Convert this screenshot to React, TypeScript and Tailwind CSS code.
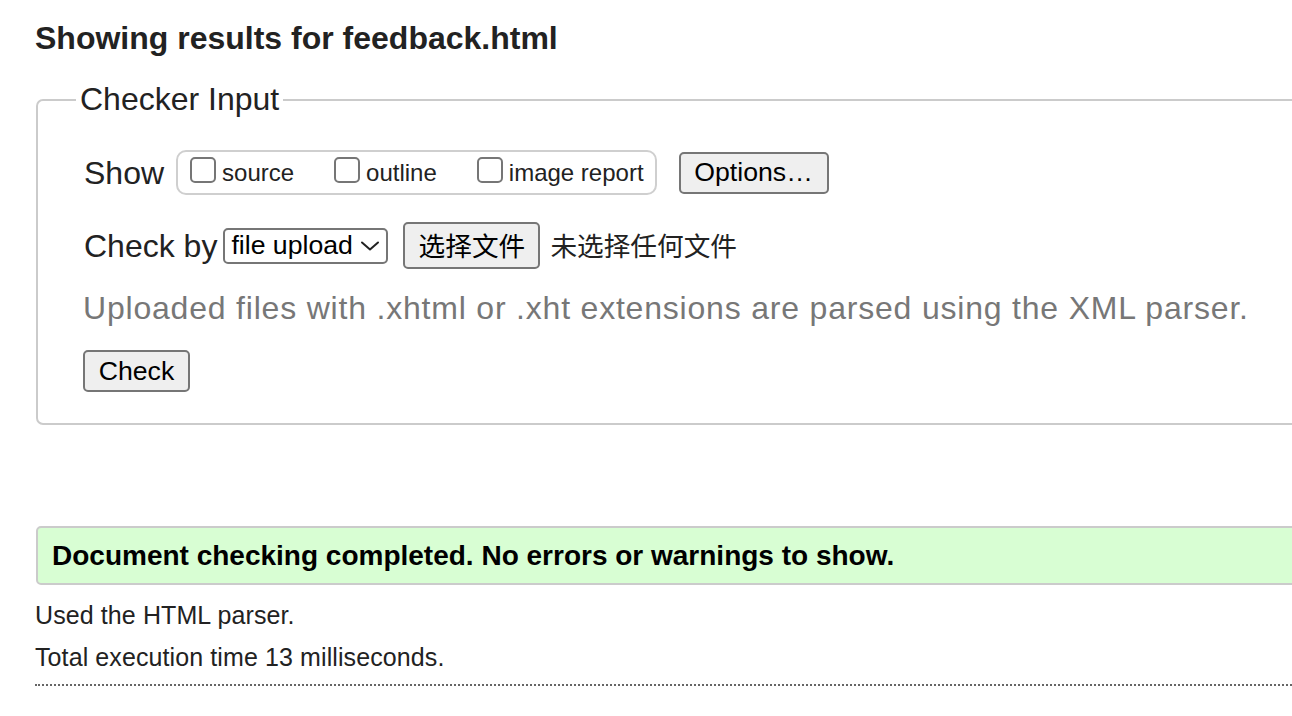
import React from 'react';

const FONT = { fontFamily: '"Liberation Sans", Arial, "Noto Sans CJK SC", sans-serif' };

function Box({ label }: { label: string }) {
  return (
    <label className="flex items-center">
      <span className="mb-[6px] block h-[26px] w-[26px] rounded-[5px] border-2 border-[#767676] bg-white" />
      <span className="ml-[6px] text-[24px] leading-[28px] text-[#222]">{label}</span>
    </label>
  );
}

function Btn({ children, className = '' }: { children: React.ReactNode; className?: string }) {
  return (
    <button
      type="button"
      className={`flex items-center justify-center rounded-[5px] border-2 border-[#767676] bg-[#efefef] text-[26.67px] leading-none text-black ${className}`}
    >
      {children}
    </button>
  );
}

export default function App() {
  return (
    <div className="w-full overflow-hidden bg-white" style={FONT}>
      <div className="w-[1340px] pl-[35px]">
        <h2 className="mt-[20px] text-[32px] font-bold leading-[37px] text-[#222]">
          Showing results for feedback.html
        </h2>

        <fieldset className="mt-[24px] ml-[1px] rounded-[7px] border-2 border-[#cbcbcb] pl-[45px] pt-[32px] pb-[31px]">
          <legend className="ml-[-7px] px-1 text-[32px] leading-[37px] text-[#222]">Checker Input</legend>

          {/* Show row */}
          <div className="flex h-[45px] items-center">
            <span className="ml-[1px] text-[32px] leading-none text-[#222]">Show</span>
            <div className="ml-[12px] flex h-[45px] items-center gap-[40px] rounded-[10px] border-2 border-[#cfcfcf] pl-[12px] pr-[11px]">
              <Box label="source" />
              <Box label="outline" />
              <Box label="image report" />
            </div>
            <Btn className="ml-[22px] h-[42px] w-[150px]">Options…</Btn>
          </div>

          {/* Check by row */}
          <div className="mt-[27px] flex h-[47px] items-center">
            <span className="ml-[1px] text-[32px] leading-none text-[#222]">Check by</span>
            <div className="ml-[6px] flex h-[36px] w-[165px] items-center justify-between rounded-[5px] border-2 border-[#767676] bg-white pl-[6px] pr-[6px]">
              <span className="text-[26.67px] leading-none text-black">file upload</span>
              <svg width="20" height="12" viewBox="0 0 20 12" fill="none">
                <path d="M2 2.5 L10 9.5 L18 2.5" stroke="#222" strokeWidth="2" strokeLinecap="round" strokeLinejoin="round" />
              </svg>
            </div>
            <Btn className="ml-[15px] h-[47px] w-[137px]">
              <span style={{ fontFamily: '"Noto Sans CJK SC", sans-serif' }}>选择文件</span>
            </Btn>
            <span
              className="ml-[10px] text-[26.67px] leading-none text-[#222]"
              style={{ fontFamily: '"Noto Sans CJK SC", sans-serif' }}
            >
              未选择任何文件
            </span>
          </div>

          <p className="mt-[21px] text-[32px] leading-[37px] tracking-[0.8px] text-[#777]">
            Uploaded files with .xhtml or .xht extensions are parsed using the XML parser.
          </p>

          <Btn className="mt-[23px] h-[42px] w-[107px]">Check</Btn>
        </fieldset>

        <div className="mt-[101px] ml-[1px] flex h-[59px] items-center rounded-[5px] border-2 border-[#cbcbcb] bg-[#d8fed3] pl-[14px]">
          <span className="text-[28px] font-bold leading-[32px] text-black">
            Document checking completed. No errors or warnings to show.
          </span>
        </div>

        <p className="mt-[15px] text-[25px] leading-[30px] tracking-[0.1px] text-[#222]">Used the HTML parser.</p>
        <p className="mt-[12px] text-[25px] leading-[30px] tracking-[0.1px] text-[#222]">Total execution time 13 milliseconds.</p>
        <div className="mt-[12px] border-t-2 border-dotted border-[#666]" />
        <div className="h-[28px]" />
      </div>
    </div>
  );
}
